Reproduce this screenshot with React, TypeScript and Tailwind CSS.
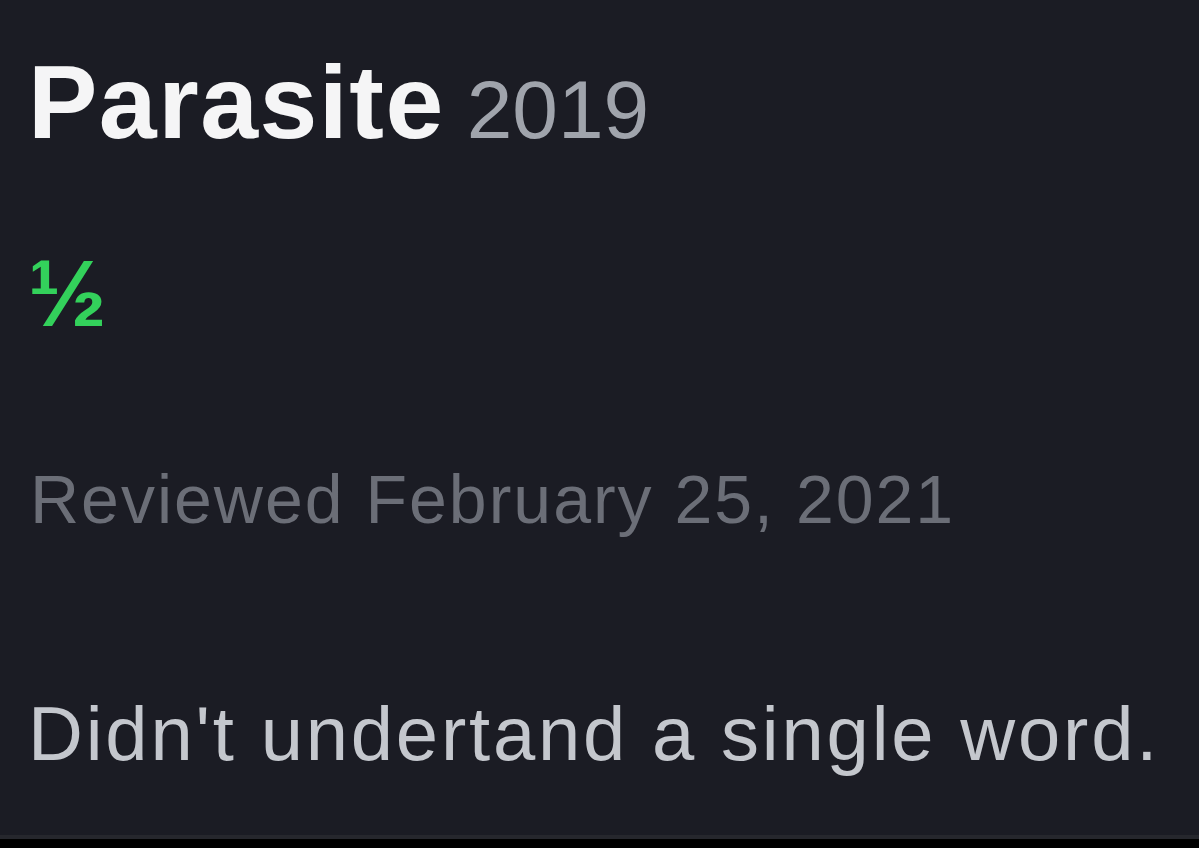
export default function App() {
    return (
        <div className="flex h-[848px] w-full flex-col bg-black">
            <div
                className="flex flex-1 flex-col bg-[#1b1c24] pl-[28px] text-left"
                style={{ fontFamily: '"Liberation Sans", Arial, sans-serif' }}
            >
                <h1 className="mt-[50px] flex items-baseline gap-[22px] leading-none">
                    <span className="text-[104px] font-bold tracking-[1.5px] text-[#f5f5f6]">Parasite</span>
                    <span className="text-[82px] font-normal text-[#a0a4ac]">2019</span>
                </h1>

                <div className="mt-[93px] text-[94px] font-bold leading-none text-[#33d15b]">½</div>

                <p className="ml-[2px] mt-[124px] text-[68px] leading-none tracking-[2px] text-[#6b6e77]">
                    Reviewed February 25, 2021
                </p>

                <p className="mt-[163px] text-[76px] leading-none tracking-[2.8px] text-[#c4c7cd]">
                    Didn't undertand a single word.
                </p>
            </div>
            <div className="h-[4px] bg-[#26272d]" />
            <div className="h-[9px] bg-black" />
        </div>
    )
}
